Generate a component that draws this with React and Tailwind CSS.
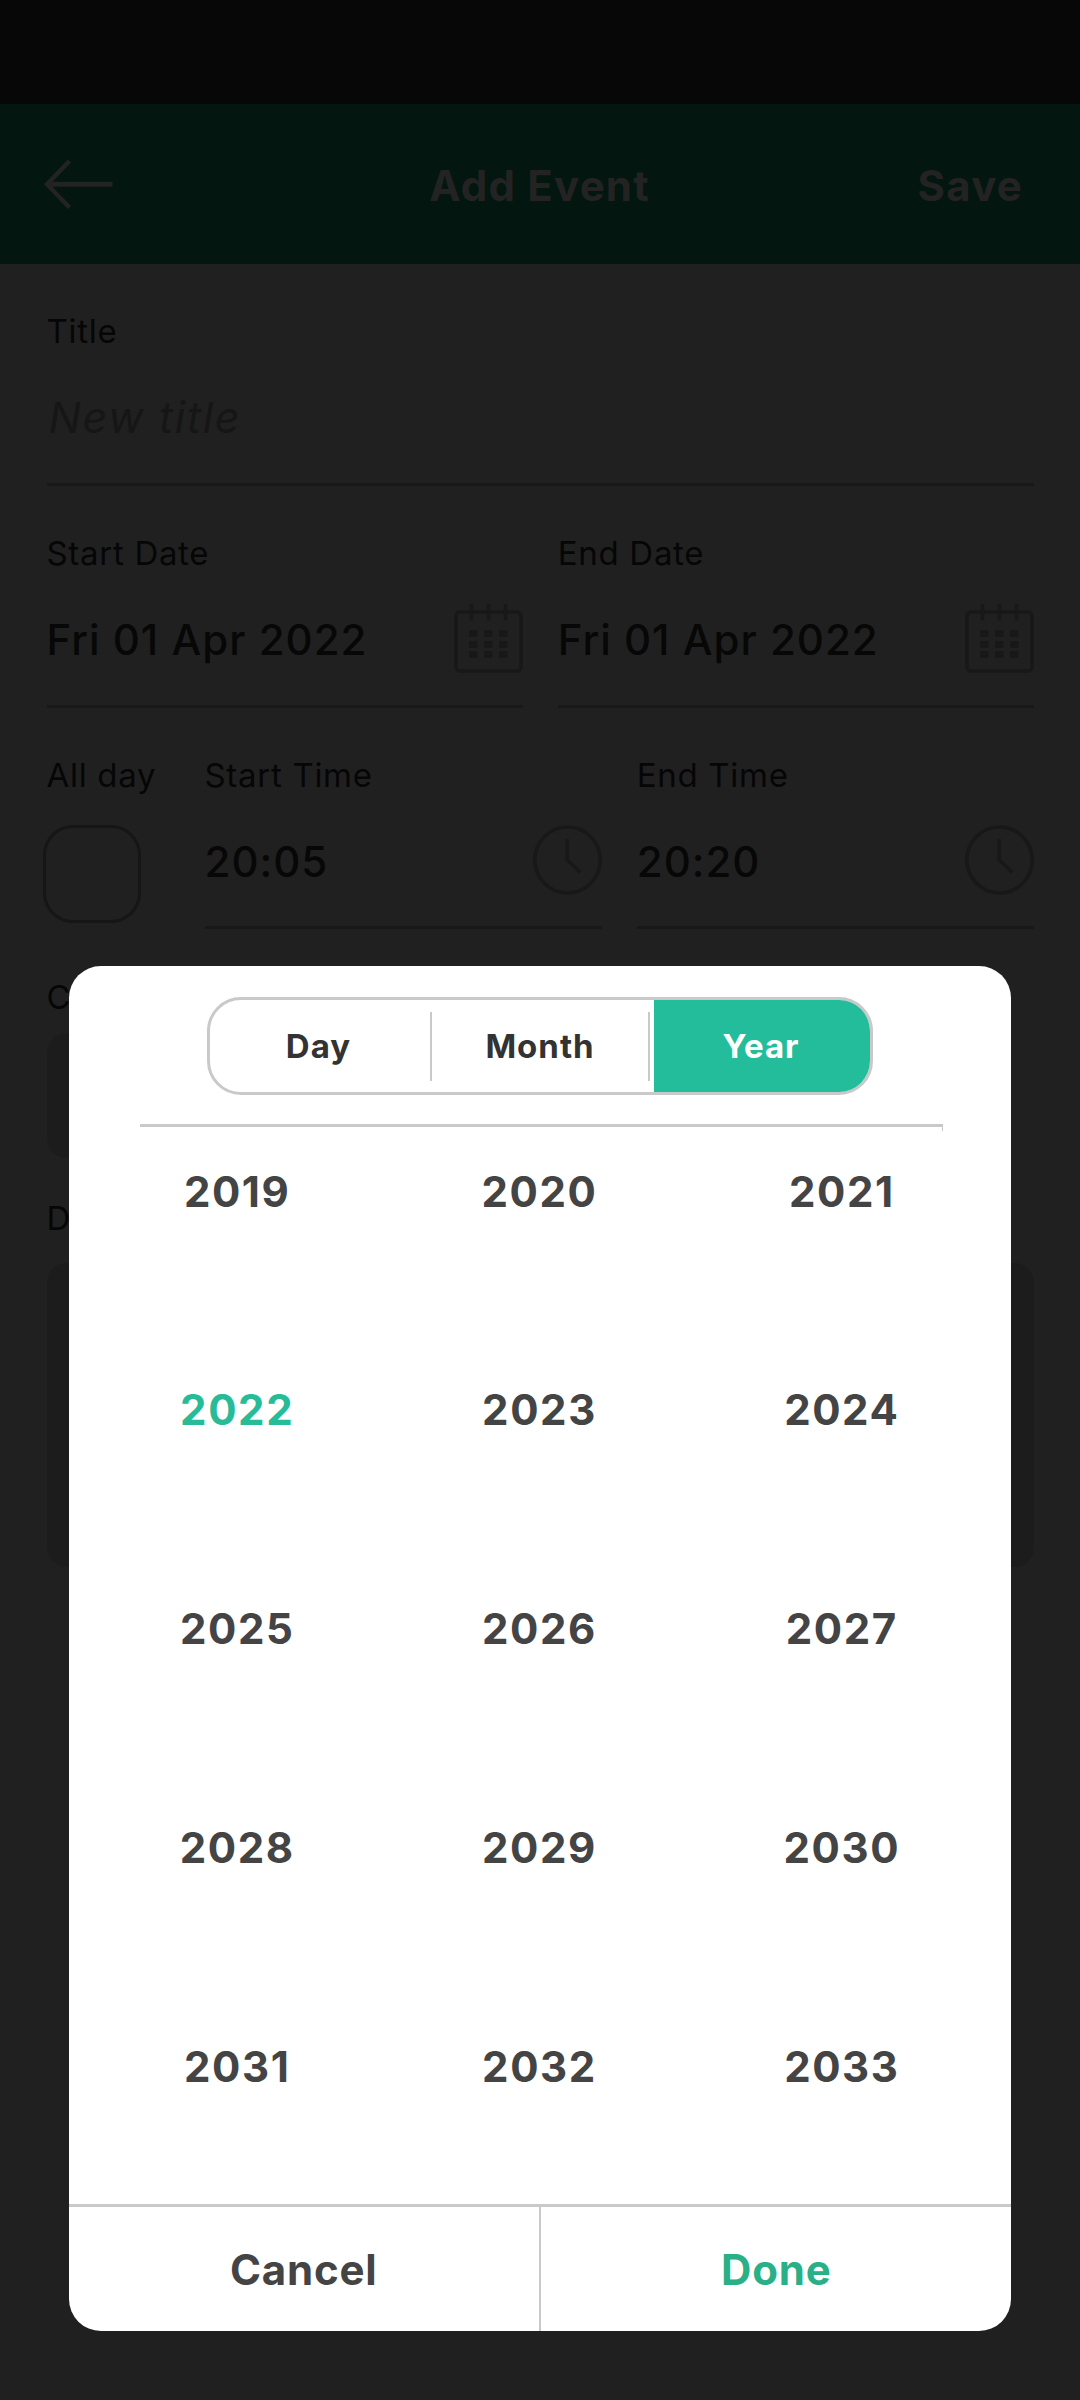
import React from "react";

function BackArrow() {
  return (
    <svg width="70" height="50" viewBox="0 0 70 50" fill="none" stroke="#232323" strokeWidth="5">
      <path d="M68.5 25.3H4" />
      <path d="M25.5 2L3 25.3L25.5 48.5" strokeWidth="4.4" />
    </svg>
  );
}

function CalendarIcon() {
  return (
    <svg className="shrink-0" width="69" height="70" viewBox="0 0 69 70" fill="none" stroke="#181818" strokeWidth="3.4">
      <rect x="2" y="9" width="65" height="59" rx="4" />
      <path d="M17.5 1V17.5M34.5 1V17.5M51.5 1V17.5" />
      <g fill="#181818" stroke="none">
        {[30, 41, 51].map((y) =>
          [15, 30, 45].map((x) => <rect key={`${x}-${y}`} x={x} y={y - 3} width="8.5" height="7" rx="1" />)
        )}
      </g>
    </svg>
  );
}

function ClockIcon() {
  return (
    <svg className="shrink-0" width="69" height="70" viewBox="0 0 69 70" fill="none" stroke="#181818" strokeWidth="3.6">
      <ellipse cx="34.5" cy="35" rx="32.7" ry="33" />
      <path d="M34.2 14V35L47.5 47.5" />
    </svg>
  );
}

const Label = ({ children }) => (
  <div className="h-11 whitespace-nowrap text-[33px] leading-[44px] tracking-[0.7px] text-[#060606]">{children}</div>
);

function Field({ label, value, icon, className = "" }) {
  return (
    <div className={`flex h-[221.75px] flex-col border-b-[3px] border-[#181818] pt-[45.25px] ${className}`}>
      <Label>{label}</Label>
      <div className="flex flex-1 items-center justify-between pb-[1px]">
        {value}
        <div className="pb-[2px]">{icon}</div>
      </div>
    </div>
  );
}

const Value = ({ children }) => (
  <span className="text-[42px] font-medium tracking-[1px] text-[#070707]">{children}</span>
);

const YEARS = Array.from({ length: 15 }, (_, i) => 2019 + i);

export default function App() {
  return (
    <div className="relative h-[2400px] w-[1080px] overflow-hidden bg-[#202020] font-['Inter',sans-serif]">
      <div className="h-[104px] bg-[#070707]" />
      <header className="grid h-40 grid-cols-3 items-center bg-[#03160f] pr-[57px] pl-[44px] text-[42px] font-bold tracking-[1.2px] text-[#232323]">
        <BackArrow />
        <h1 className="pt-0.5 pl-[12px] text-center whitespace-nowrap">Add Event</h1>
        <span className="pt-0.5 text-right">Save</span>
      </header>

      <main className="pr-[46px] pl-[46.5px]">
        <Field
          label="Title"
          value={<span className="pb-px pl-0.5 text-[43px] tracking-[1.7px] text-[#161616] italic">New title</span>}
        />
        <div className="flex gap-[35px]">
          <Field className="flex-1" label="Start Date" value={<Value>Fri 01 Apr 2022</Value>} icon={<CalendarIcon />} />
          <Field className="flex-1" label="End Date" value={<Value>Fri 01 Apr 2022</Value>} icon={<CalendarIcon />} />
        </div>
        <div className="flex">
          <div className="w-[158px] pt-[45.25px]">
            <Label>All day</Label>
            <div className="mt-[28.5px] -ml-[4px] h-[98px] w-[98px] rounded-[30px] border-[3px] border-[#161616]" />
          </div>
          <div className="flex flex-1 gap-[35px]">
            <Field className="flex-1" label="Start Time" value={<Value>20:05</Value>} icon={<ClockIcon />} />
            <Field className="flex-1" label="End Time" value={<Value>20:20</Value>} icon={<ClockIcon />} />
          </div>
        </div>
        <div className="pt-[45.25px]">
          <Label>Category</Label>
          <div className="mt-[14.5px] h-[125px] w-[480px] rounded-[20px] bg-[#1c1c1c]" />
        </div>
        <div className="pt-[38px]">
          <Label>Description</Label>
          <div className="mt-[23px] h-[304px] rounded-[20px] bg-[#1c1c1c]" />
        </div>
      </main>

      <section className="absolute top-[966px] left-[69px] flex h-[1365px] w-[942px] flex-col overflow-hidden rounded-[32px] bg-white">
        <div className="mx-auto mt-[31px] flex h-[98px] w-[666px] shrink-0 items-center overflow-hidden rounded-[34px] border-[3px] border-[#c9c9c9] text-center text-[33px] font-bold tracking-[1px] text-[#333333]">
          <div className="w-[220px] pt-0.5 pr-[3px]">Day</div>
          <div className="h-[69px] w-0.5 bg-[#c9c9c9]" />
          <div className="w-[216px] pt-0.5">Month</div>
          <div className="h-[69px] w-0.5 bg-[#c9c9c9]" />
          <div className="ml-1 flex h-full flex-1 items-center justify-center bg-[#23bd9b] pt-0.5 pr-0.5 text-white">Year</div>
        </div>
        <div className="relative mt-[29px] ml-[71px] h-[3px] w-[803px] shrink-0 bg-[#c9c9c9]">
          <div className="absolute top-[3px] right-0 h-1 w-px bg-[#c9c9c9]" />
        </div>
        <div className="grid h-[1077px] shrink-0 auto-rows-[218.75px] grid-cols-3 overflow-hidden pt-[39.5px] pr-[18px] pl-[17px] text-center text-[42px] leading-[50px] font-bold tracking-[1.6px] text-[#444444]">
          {YEARS.map((year) => (
            <div key={year} className={year === 2022 ? "text-[#27bb98]" : ""}>
              {year}
            </div>
          ))}
        </div>
        <footer className="flex flex-1 border-t-[3px] border-[#c9c9c9] text-[42px] font-bold tracking-[0.8px]">
          <div className="flex flex-1 items-center justify-center border-r-2 border-[#c9c9c9] text-[#444444]">Cancel</div>
          <div className="flex flex-1 items-center justify-center pl-px text-[#29b087]">Done</div>
        </footer>
      </section>
    </div>
  );
}
